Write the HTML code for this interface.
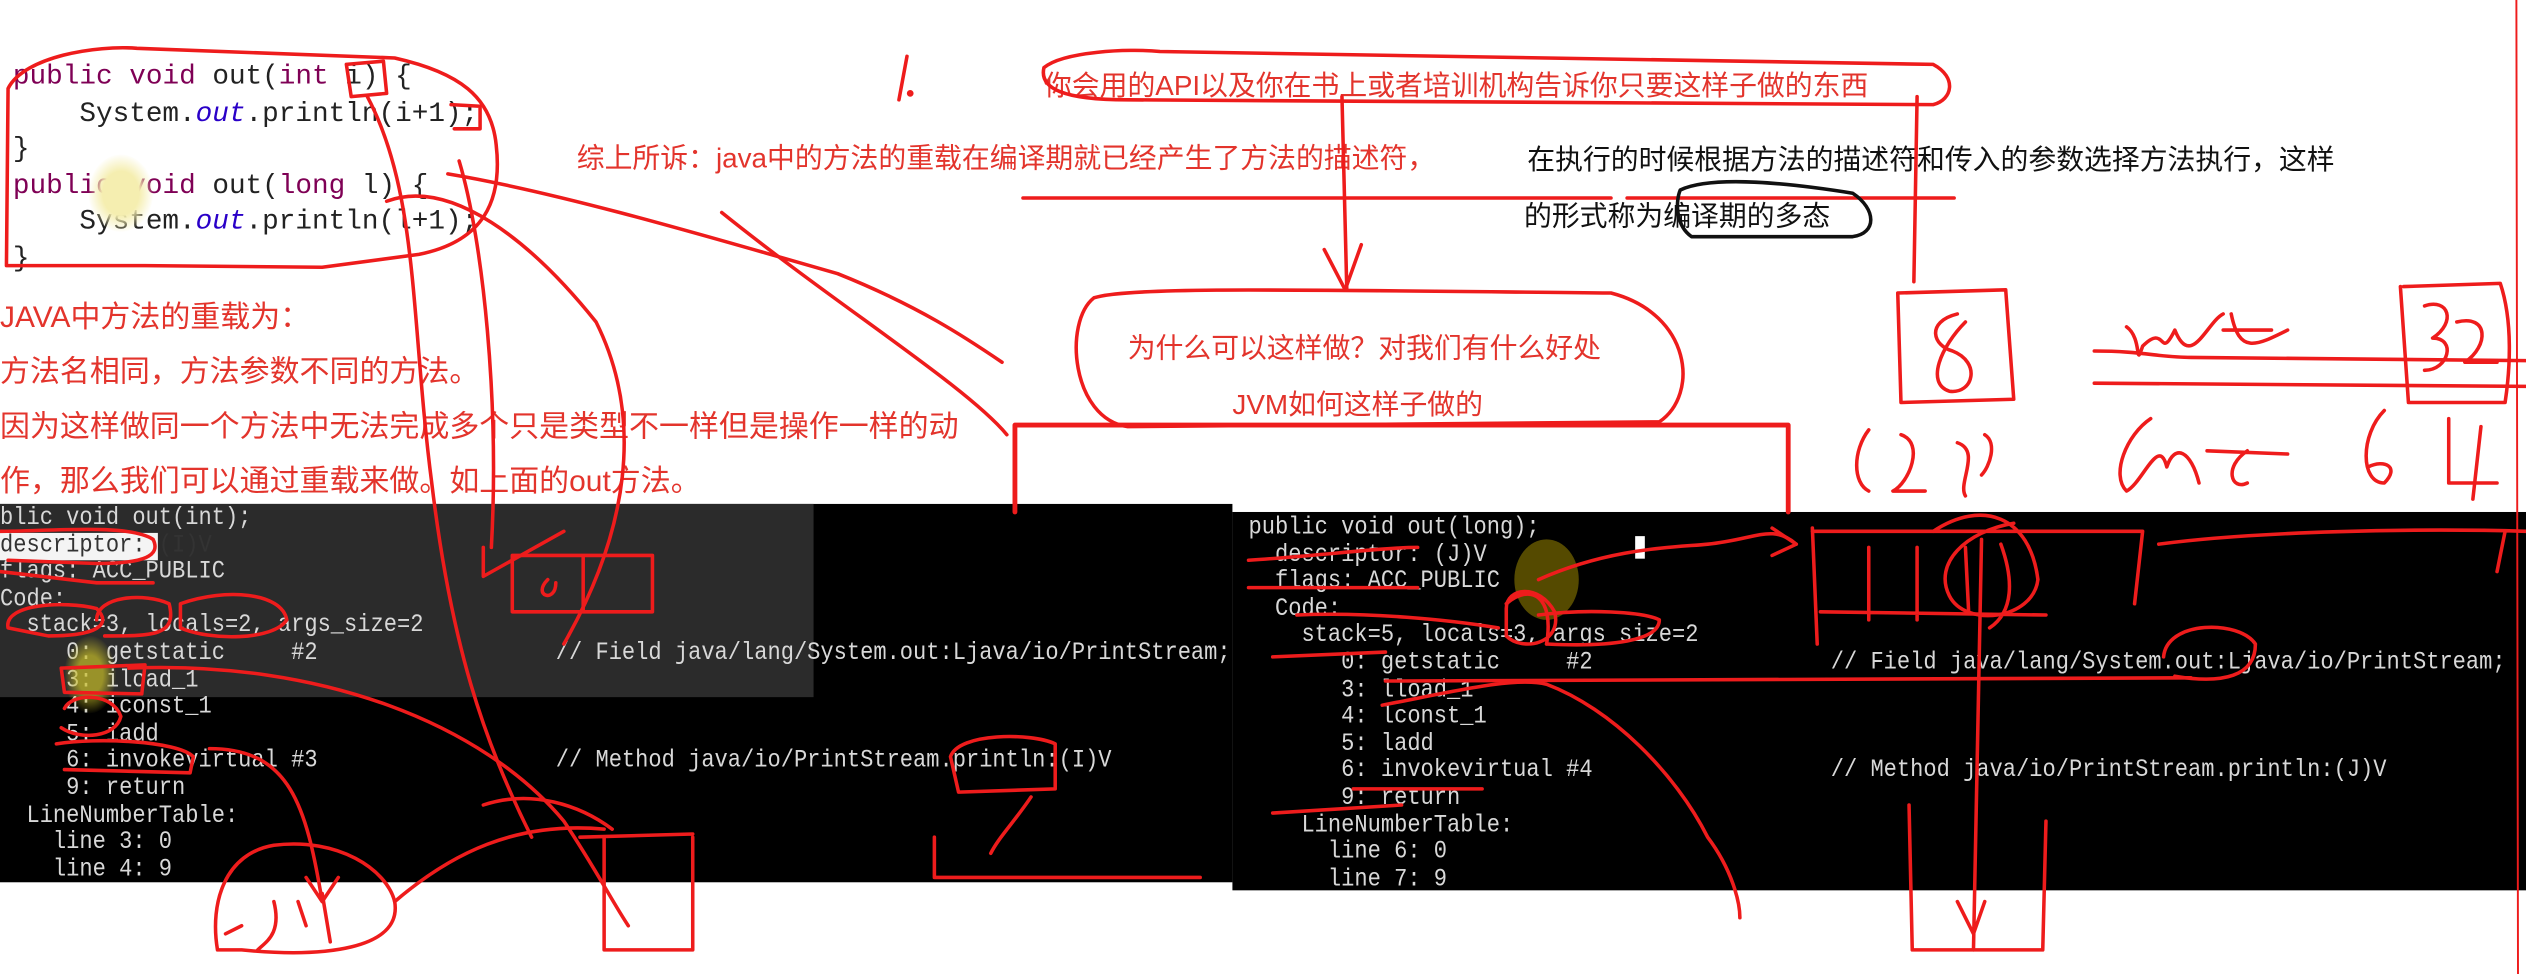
<!DOCTYPE html>
<html><head><meta charset="utf-8"><style>
html,body{margin:0;padding:0;background:#fff;overflow:hidden}
#w{position:relative;width:1568px;height:605px;transform:scale(1.611,1.61);transform-origin:0 0;background:#fff}
.a{position:absolute;white-space:pre}
.code{font-family:"Liberation Mono",monospace;font-size:17.2px;color:#222;line-height:22.5px}
.kw{color:#7f0055}.it{color:#2a00c8;font-style:italic}
.cn{font-family:"Liberation Sans","Noto Sans CJK SC",sans-serif;color:#e3342c}
.blk{background:#000}
.t{font-family:"Liberation Mono",monospace;font-size:13.7px;color:#d8d8d8;line-height:14.6px;transform:scaleY(1.15);transform-origin:0 0}
svg{position:absolute;left:0;top:0}
</style></head><body><div id="w">

<div class="a code" style="left:8px;top:38px"><span class="kw">public</span> <span class="kw">void</span> out(<span class="kw">int</span> i) {
    System.<span class="it">out</span>.println(i+1);
}
<span class="kw">public</span> <span class="kw">void</span> out(<span class="kw">long</span> l) {
    System.<span class="it">out</span>.println(l+1);
}</div>
<div class="a" style="left:55px;top:96px;width:40px;height:48px;border-radius:50%;background:radial-gradient(#f5eeb0 40%,rgba(255,255,255,0) 72%)"></div>

<div class="a cn" style="left:0;top:180px;font-size:18.6px;line-height:34px">JAVA中方法的重载为：
方法名相同，方法参数不同的方法。
因为这样做同一个方法中无法完成多个只是类型不一样但是操作一样的动
作，那么我们可以通过重载来做。如上面的out方法。</div>

<div class="a cn" style="left:358px;top:84px;font-size:17.3px">综上所诉：java中的方法的重载在编译期就已经产生了方法的描述符，</div>
<div class="a cn" style="left:948px;top:85px;font-size:17.3px;color:#111">在执行的时候根据方法的描述符和传入的参数选择方法执行，这样</div>
<div class="a cn" style="left:946px;top:120px;font-size:17.3px;color:#111">的形式称为编译期的多态</div>
<div class="a cn" style="left:648px;top:39px;font-size:17.3px">你会用的API以及你在书上或者培训机构告诉你只要这样子做的东西</div>
<div class="a cn" style="left:700px;top:202px;font-size:17.3px">为什么可以这样做？对我们有什么好处</div>
<div class="a cn" style="left:765px;top:237px;font-size:17.3px">JVM如何这样子做的</div>

<div class="a blk" style="left:0;top:313px;width:765px;height:235px"></div>
<div class="a" style="left:0;top:313px;width:505px;height:120px;background:#2b2b2b"></div>
<div class="a" style="left:0;top:331px;width:98px;height:17px;background:#f4f4f4"></div>
<div class="a t" style="left:0;top:315px">blic void out(int);
<span style="color:#333">descriptor: (I)V</span>
flags: ACC_PUBLIC
Code:
  stack=3, locals=2, args_size=2
     0: getstatic     #2                  // Field java/lang/System.out:Ljava/io/PrintStream;
     3: iload_1
     4: iconst_1
     5: iadd
     6: invokevirtual #3                  // Method java/io/PrintStream.println:(I)V
     9: return
  LineNumberTable:
    line 3: 0
    line 4: 9</div>
<div class="a" style="left:40px;top:395px;width:32px;height:48px;border-radius:50%;background:radial-gradient(rgba(200,190,40,.7) 35%,rgba(0,0,0,0) 72%)"></div>

<div class="a blk" style="left:765px;top:318px;width:803px;height:235px"></div>
<div class="a" style="left:940px;top:335px;width:40px;height:50px;border-radius:50%;background:#554a00"></div>
<div class="a" style="left:1015px;top:333px;width:6px;height:14px;background:#fff"></div>
<div class="a t" style="left:775px;top:321px">public void out(long);
  descriptor: (J)V
  flags: ACC_PUBLIC
  Code:
    stack=5, locals=3, args_size=2
       0: getstatic     #2                  // Field java/lang/System.out:Ljava/io/PrintStream;
       3: lload_1
       4: lconst_1
       5: ladd
       6: invokevirtual #4                  // Method java/io/PrintStream.println:(J)V
       9: return
    LineNumberTable:
      line 6: 0
      line 7: 9</div>

<svg width="1568" height="605" viewBox="0 0 1568 605" fill="none" stroke="#ee1c1c" stroke-width="2.2" stroke-linecap="round" stroke-linejoin="round">
<path d="M5,55 C15,35 60,28 85,30 L245,36 C285,45 305,60 308,90 C312,125 300,150 260,158 L200,166 L90,165 L4,165 Z"/>
<path d="M215,40 L238,38 L240,58 L218,60 Z"/>
<path d="M280,65 L298,66 L298,80 L282,80"/>
<path d="M563,35 L558,62"/><circle cx="565" cy="58" r="1" />
<path d="M228,60 C260,120 255,200 268,300 C280,400 300,460 330,520"/>
<path d="M285,100 C300,150 310,250 305,340"/>
<path d="M240,125 C280,110 330,150 370,200 C400,260 390,330 350,400"/>
<path d="M448,132 C520,190 600,240 625,270"/>
<path d="M278,108 C350,120 450,150 520,170 C570,190 600,210 622,225"/>
<path d="M350,330 L300,358 L300,340"/>
<path d="M648,42 C660,32 700,30 720,32 L1200,40 C1215,48 1212,62 1200,65 L700,62 C660,62 645,55 648,42 Z"/>
<path d="M833,60 L836,180 M822,155 L835,180 L845,152"/>
<path d="M679,185 C700,178 800,180 1000,182 C1050,195 1055,245 1030,262 L700,265 C665,260 660,200 679,185 Z"/>
<path d="M630,264 L1110,264 L1110,318 M630,264 L630,318" stroke-width="3"/>
<path d="M1010,123 L1213,123 M635,123 L1000,123" />
<path d="M1043,118 C1060,110 1100,112 1150,120 C1165,130 1165,145 1150,147 L1050,147 C1040,140 1040,125 1043,118 Z" stroke="#111"/>
<path d="M1190,60 L1188,175"/>
<path d="M1178,182 L1245,180 L1250,248 L1180,250 Z"/>
<path d="M1215,195 C1195,200 1200,215 1212,218 C1230,225 1225,245 1210,243 C1195,238 1205,215 1220,200"/>
<path d="M1300,218 C1330,218 1340,222 1360,222 L1568,224 M1300,238 L1568,240"/>
<path d="M1320,203 C1330,210 1325,230 1330,215 C1345,200 1340,225 1350,205 C1360,230 1370,200 1380,195 M1385,195 C1390,220 1400,215 1420,205 M1380,205 L1410,205"/>
<path d="M1490,178 L1495,250 M1492,178 L1552,176 C1560,200 1558,230 1555,250 L1495,250"/>
<path d="M1505,190 C1520,185 1525,200 1510,210 C1525,210 1520,230 1505,230 M1525,200 C1545,195 1545,215 1530,225 L1550,225"/>
<path d="M1335,260 C1320,270 1310,295 1320,305 C1330,300 1340,270 1345,290 C1350,275 1360,280 1365,300 M1370,280 L1420,282 M1395,280 C1380,290 1385,305 1395,300 M1480,255 C1465,270 1465,300 1480,300 C1490,290 1480,285 1470,290 M1520,260 L1520,300 L1550,300 M1540,265 L1535,310"/>
<path d="M1160,267 C1150,280 1150,300 1160,305 M1180,270 C1195,275 1185,300 1175,305 L1195,305 M1215,275 C1230,280 1215,300 1220,308 M1232,270 C1240,275 1235,290 1230,295"/>
<path d="M1562,0 L1563,605" stroke-width="1.2"/>
<path d="M0,330 C30,330 80,325 95,335 C100,345 90,350 60,350 L5,348"/>
<path d="M0,355 L60,362 L95,362"/>
<path d="M5,390 C2,375 40,373 60,378 C70,388 60,395 30,395 Z"/>
<path d="M60,385 C60,370 90,368 105,375 C110,395 95,395 65,395"/>
<path d="M112,375 C140,365 175,368 178,385 C170,398 130,398 112,390 Z"/>
<path d="M38,415 L90,413 L88,431 L40,430 Z"/>
<path d="M40,440 C45,430 70,430 75,445 C72,458 50,460 38,452"/>
<path d="M35,462 C60,458 110,460 120,470 L118,480 L40,478"/>
<path d="M318,345 L405,345 L405,380 L318,380 Z M362,345 L362,380 M340,360 C330,370 345,375 345,362"/>
<path d="M590,470 C595,455 640,455 655,462 L655,490 L595,492 Z M640,495 C630,510 620,520 615,530"/>
<path d="M580,520 L580,545 L745,545"/>
<path d="M135,590 C130,560 140,530 170,525 C210,520 240,540 245,560 C250,590 200,595 150,590 Z"/>
<path d="M140,580 L150,575 M170,560 C175,580 165,585 160,590 M185,560 L190,575 M200,555 L205,585"/>
<path d="M245,560 C280,530 320,510 375,515"/>
<path d="M375,520 L375,590 L430,590 L430,520 M360,520 L430,518"/>
<path d="M80,415 C200,410 300,450 350,510 C370,540 380,560 390,575"/>
<path d="M130,465 C180,465 190,500 200,560 M190,545 L200,560 L210,545"/>
<path d="M300,500 C330,490 360,500 380,515"/>
<path d="M775,348 C820,345 860,340 880,340"/>
<path d="M775,365 L880,365 M805,382 C850,380 900,385 930,390"/>
<path d="M935,378 C935,365 955,362 965,380 C970,400 945,405 935,395 Z M935,375 C950,362 965,370 960,400"/>
<path d="M955,382 C985,378 1020,380 1030,385 C1030,398 1000,402 960,400"/>
<path d="M790,408 L860,405"/>
<path d="M955,360 C1000,340 1040,340 1060,338 C1090,335 1100,325 1115,338"/>
<path d="M1100,328 L1115,338 L1100,345"/>
<path d="M1125,328 L1128,400 M1125,330 L1330,330 L1325,375 M1130,380 L1270,382 M1160,340 L1160,385 M1190,340 L1190,385 M1220,340 L1222,380 M1242,338 C1250,360 1250,380 1235,390"/>
<path d="M1200,330 C1230,310 1260,320 1265,360 C1262,385 1220,390 1210,370 C1200,350 1220,330 1250,325"/>
<path d="M1340,338 C1400,330 1500,328 1568,330 M1555,330 L1550,355"/>
<path d="M1343,408 C1345,385 1390,385 1400,400 C1400,420 1380,425 1350,420"/>
<path d="M860,423 L1360,421"/>
<path d="M858,438 C900,430 940,420 960,425 C1000,440 1040,480 1060,520 C1075,540 1080,560 1080,570"/>
<path d="M840,490 L920,490 M790,505 L870,500"/>
<path d="M1230,335 L1225,590 M1215,560 L1225,580 L1232,560"/>
<path d="M1185,500 L1187,590 L1268,590 L1270,510"/>
</svg>
</div></body></html>
